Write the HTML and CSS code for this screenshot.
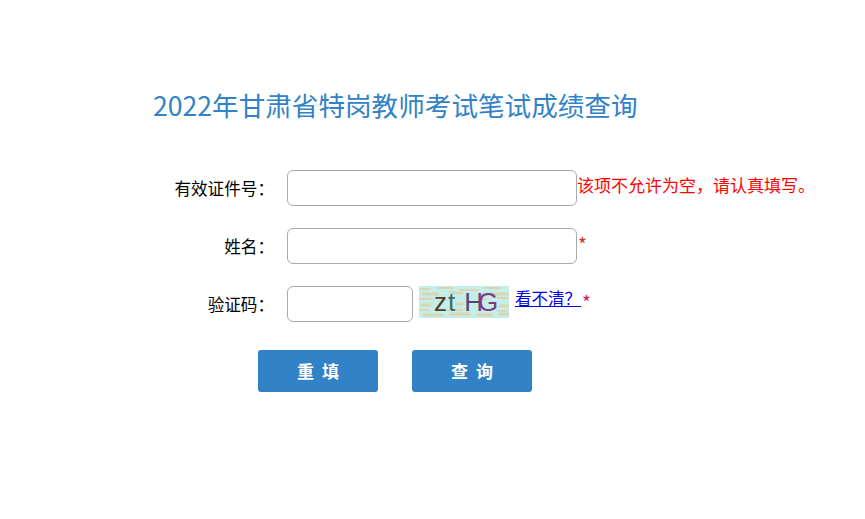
FILE: index.html
```html
<!DOCTYPE html>
<html lang="zh-CN">
<head>
<meta charset="utf-8">
<title>成绩查询</title>
<link rel="stylesheet" href="styles.css">
</head>
<body>
<main class="page">
  <h1 class="title">2022年甘肃省特岗教师考试笔试成绩查询</h1>
  <form class="form">
    <div class="row">
      <label class="label" for="cid">有效证件号<span class="colon">：</span></label>
      <input class="field" id="cid" type="text">
      <span class="error">该项不允许为空，请认真填写。</span>
    </div>
    <div class="row">
      <label class="label" for="name">姓名<span class="colon">：</span></label>
      <input class="field" id="name" type="text">
      <span class="star star-dark">*</span>
    </div>
    <div class="row">
      <label class="label" for="code">验证码<span class="colon">：</span></label>
      <input class="field field-short" id="code" type="text">
      <svg class="captcha" width="90" height="32" viewBox="0 0 90 32" role="img" aria-label="验证码">
        <defs>
          <linearGradient id="capInk" gradientUnits="userSpaceOnUse" x1="15" y1="0" x2="79" y2="0">
            <stop offset="0.21" stop-color="#4d3c2c"/>
            <stop offset="0.21" stop-color="#3e6a60"/>
            <stop offset="0.42" stop-color="#3e6a60"/>
            <stop offset="0.42" stop-color="#5b4078"/>
            <stop offset="0.70" stop-color="#5b4078"/>
            <stop offset="0.70" stop-color="#7c3c80"/>
          </linearGradient>
        </defs>
        <rect width="90" height="32" fill="#c6eee8"/>
        <g stroke="#d8d6b4" fill="none">
          <path stroke-width="2" d="M0 3 H12 M18 2 H34 M40 4 H60 M64 2 H82"/>
          <path stroke-width="3" d="M3 8 H20 M30 7 H44 M72 8 H90"/>
          <path stroke-width="2" d="M0 13 H14 M60 13 H68 M78 12 H90"/>
          <path stroke-width="3" d="M2 19 H12 M36 18 H44 M80 20 H90"/>
          <path stroke-width="2" d="M0 24 H10 M28 24 H44 M78 25 H88"/>
          <path stroke-width="3" d="M4 29 H24 M30 28 H52 M58 29 H74 M80 28 H90"/>
        </g>
        <text class="cap-text" x="15" y="25" dx="0 1 9 -5" fill="url(#capInk)">ztHG</text>
      </svg>
      <a class="refresh" href="#">看不清？</a>
      <span class="star star-link">*</span>
    </div>
    <div class="actions">
      <button class="btn" type="reset">重 填</button>
      <button class="btn" type="button">查 询</button>
    </div>
  </form>
</main>
</body>
</html>
```
FILE: styles.css
```css
html, body {
  margin: 0;
  padding: 0;
  background: #fff;
}
body {
  font-family: "Noto Sans CJK SC", "Noto Sans", sans-serif;
  font-size: 16px;
  color: #000;
}
.page {
  width: 865px;
  height: 519px;
  overflow: hidden;
  padding: 85px 0 0 153px;
  box-sizing: border-box;
}
.title {
  margin: 0 0 46px;
  font-size: 26.6px;
  line-height: 39px;
  font-weight: 400;
  color: #3182c6;
  white-space: nowrap;
}
.form {
  display: flex;
  flex-direction: column;
  gap: 22px;
}
.row {
  display: flex;
  align-items: flex-start;
  height: 36px;
  white-space: nowrap;
}
.label {
  width: 121px;
  margin-right: 13px;
  text-align: right;
  font-size: 16.6px;
  line-height: 37px;
  height: 36px;
}
.colon {
  font-family: "Noto Sans CJK TC", sans-serif;
}
.field {
  width: 290px;
  height: 36px;
  box-sizing: border-box;
  border: 1px solid #aaa;
  border-radius: 6px;
  padding: 0 8px;
  background: #fff;
  outline: none;
  flex: none;
}
.field-short {
  width: 126px;
}
.error {
  color: #f00;
  font-size: 17px;
  line-height: 30px;
}
.star {
  font-size: 19px;
  line-height: 31px;
}
.star-dark {
  color: #c0392b;
  margin-left: 1px;
}
.star-link {
  color: #e0185a;
  margin-left: 1px;
}
.captcha {
  margin-left: 6px;
  flex: none;
}
.cap-text {
  font-family: "Liberation Sans", sans-serif;
  font-size: 26px;
}
.refresh {
  margin-left: 6px;
  color: #00e;
  font-size: 16.5px;
  line-height: 24px;
}
.actions {
  display: flex;
  gap: 34px;
  margin: 6px 0 0 105px;
}
.btn {
  width: 120px;
  height: 42px;
  border: 0;
  border-radius: 3px;
  background: #3182c6;
  color: #fff;
  font-family: inherit;
  font-size: 17px;
  font-weight: 700;
  word-spacing: 4px;
  padding: 0 0 2px;
}
```
